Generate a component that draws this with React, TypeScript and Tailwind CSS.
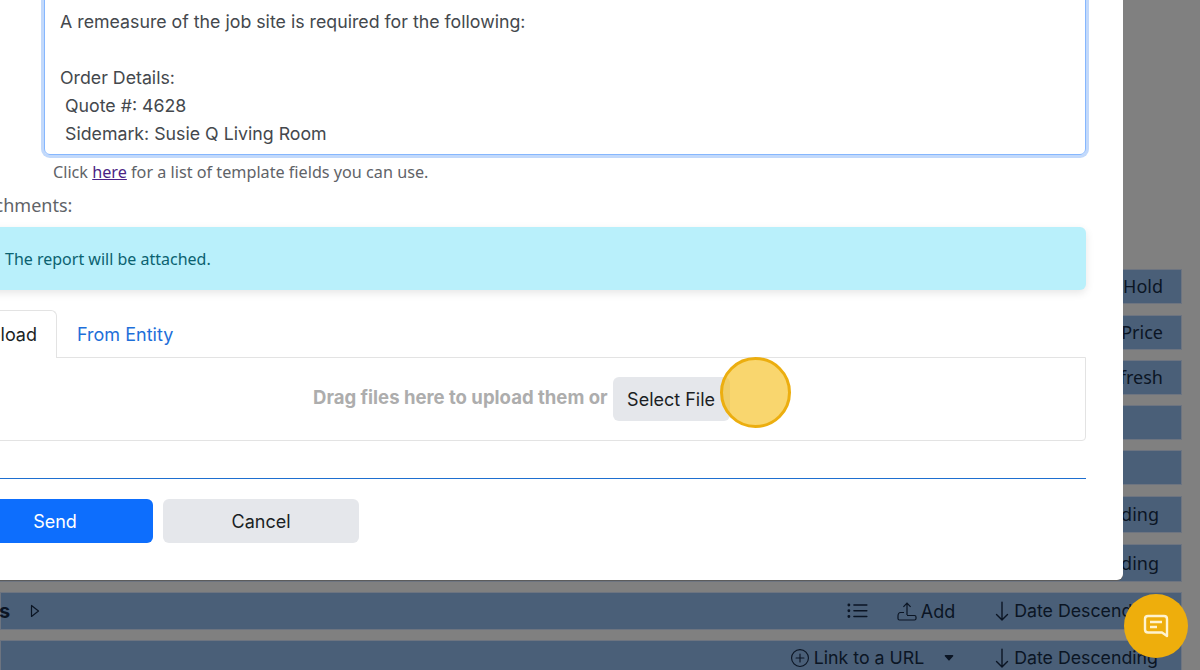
import { BsArrowDown, BsCaretDownFill, BsListUl, BsPlusCircle } from "react-icons/bs";

const sideRows = [
  { label: "Hold", height: "h-[35px]", margin: "mt-0", pad: "pr-[18px]" },
  { label: "Price", height: "h-[35px]", margin: "mt-[11px]", pad: "pr-[18px]" },
  { label: "Refresh", height: "h-[35px]", margin: "mt-[10px]", pad: "pr-[18px]" },
  { label: "", height: "h-[35px]", margin: "mt-[10px]", pad: "pr-[18px]" },
  { label: "", height: "h-[35px]", margin: "mt-[10px]", pad: "pr-[18px]" },
  { label: "Date Descending", height: "h-[37px]", margin: "mt-[11px]", pad: "pr-[22px]" },
  { label: "Date Descending", height: "h-[38px]", margin: "mt-[11px]", pad: "pr-[22px]" },
];

const TrayUpload = () => (
  <svg width="20" height="19" viewBox="0 0 20 19" fill="none" stroke="currentColor" strokeWidth="1.2">
    <path d="M10 13V1.2M6.4 4.800 10 1.200l3.600 3.600" />
    <path d="M7 10.500H3.500C2 10.500 1 12 1 14v2.500c0 .9.600 1.500 1.500 1.500h15c.9 0 1.500-.6 1.500-1.500V15c0-.9-.6-1.500-1.500-1.500H10" />
  </svg>
);

const ChatIcon = () => (
  <svg width="26" height="24" viewBox="0 0 26 24" fill="none" stroke="#fff3cf" strokeWidth="2.400">
    <path d="M5 2h16c1.700 0 3 1.300 3 3v17l-5-3.500H5c-1.700 0-3-1.300-3-3V5c0-1.700 1.300-3 3-3Z" strokeLinejoin="round" />
    <path d="M7 8h12M7 13h7" />
  </svg>
);

const OutlineCaret = () => (
  <svg width="10" height="14" viewBox="0 0 10 14" fill="none" stroke="currentColor" strokeWidth="1.200">
    <path d="M1.500 1.500v11L8.500 7Z" strokeLinejoin="round" />
  </svg>
);

export default function App() {
  return (
    <div className="relative h-[670px] w-[1200px] overflow-hidden bg-[#808080] text-[18px] text-[#0b1524] [font-family:Inter,sans-serif]">
      {/* Page behind the dialog */}
      <div className="flex flex-col pt-[269px] pr-[18px]">
        {sideRows.map((row, i) => (
          <div
            key={i}
            className={`flex items-center justify-end border border-[#6d7480] bg-[#4a5f78] [font-family:'Noto_Sans',sans-serif] ${row.pad} ${row.height} ${row.margin}`}
          >
            {row.label}
          </div>
        ))}

        <div className="mt-[10px] flex h-[38px] items-center justify-between border border-[#6d7480] bg-[#4a5f78] pr-[23px]">
          <div className="flex items-center">
            <span className="-ml-[2px] text-[20px] font-bold">s</span>
            <span className="ml-[20px]">
              <OutlineCaret />
            </span>
          </div>
          <div className="flex items-center text-[17.75px]">
            <BsListUl className="text-[23px]" />
            <span className="ml-[28px]">
              <TrayUpload />
            </span>
            <span className="ml-[4px] text-[18px]">Add</span>
            <BsArrowDown className="ml-[36px] text-[22px]" />
            <span className="ml-[1px] whitespace-nowrap">Date Descending</span>
          </div>
        </div>

        <div className="mt-[10px] flex h-[36px] items-center justify-end border border-[#6d7480] bg-[#4a5f78] pr-[23px] text-[17.75px]">
          <BsPlusCircle className="text-[18px]" />
          <span className="ml-[5px]">Link to a URL</span>
          <BsCaretDownFill className="ml-[19px] text-[12px]" />
          <BsArrowDown className="ml-[36px] text-[22px]" />
          <span className="ml-[1px] whitespace-nowrap">Date Descending</span>
        </div>
      </div>

      {/* Dialog */}
      <div className="absolute top-0 left-0 h-[580px] w-[1123px] overflow-hidden rounded-br-[6px] bg-white pr-[37px] text-[#44484d] shadow-[0_1px_0_#5c5c5c]">
        <div className="-mt-[8px] ml-[44px] h-[163px] rounded-[6px] border border-[#86b7fe] px-[15px] pt-[15px] text-[17.75px] leading-[28px] whitespace-pre shadow-[0_0_0_3px_#c2d9fb]">
          <div>A remeasure of the job site is required for the following:</div>
          <div>&nbsp;</div>
          <div>Order Details:</div>
          <div> Quote #: 4628</div>
          <div> Sidemark: Susie Q Living Room</div>
        </div>

        <div className="mt-[5px] ml-[53px] text-[16.2px] leading-[24px] text-[#5f6368] [font-family:'Noto_Sans',sans-serif]">
          Click <a className="text-[#4b1f85] underline">here</a> for a list of template fields you can use.
        </div>

        <div className="mt-[9px] -ml-[40px] text-[18px] leading-[24px] text-[#5f6368] [font-family:'Noto_Sans',sans-serif]">
          Attachments:
        </div>

        <div className="mt-[10px] -ml-[20px] flex h-[63px] items-center rounded-[6px] bg-[#b9f0fb] pl-[25px] text-[16px] text-[#0b6270] shadow-[0_3px_8px_rgba(0,0,0,0.1)] [font-family:'Noto_Sans',sans-serif]">
          The report will be attached.
        </div>

        <div className="mt-[20px] flex h-[47px]">
          <div className="relative z-10 -mb-px -ml-[40px] flex w-[97px] items-center justify-end rounded-t-[6px] border border-b-0 border-[#e3e3e3] bg-white pr-[19px] text-[#1b1f24]">
            Upload
          </div>
          <div className="ml-[20px] flex items-center pt-[2px] text-[#1e6fd9]">From Entity</div>
        </div>

        <div className="-ml-[20px] flex h-[84px] items-center rounded-b-[4px] border border-[#e3e3e3] pl-[332px]">
          <div className="-mt-[2px] mr-[5px] text-[18.55px] font-bold whitespace-nowrap text-[#adadad]">
            Drag files here to upload them or
          </div>
          <div className="flex h-[44px] w-[117px] items-center justify-center rounded-[6px] bg-[#e5e7eb] text-[#1b1f24]">
            Select File
          </div>
        </div>

        <div className="mt-[37px] -ml-[20px] h-px bg-[#1e6fd0]" />

        <div className="mt-[20px] flex gap-[10px]">
          <div className="-ml-[43px] flex h-[44px] w-[196px] items-center justify-center rounded-[6px] bg-[#0d6efd] text-white">
            Send
          </div>
          <div className="flex h-[44px] w-[196px] items-center justify-center rounded-[6px] bg-[#e5e7eb] text-[#1b1f24]">
            Cancel
          </div>
        </div>
      </div>

      {/* Highlight marker over the Select File button */}
      <div className="absolute top-[357px] left-[720px] size-[71px] rounded-full border-[3px] border-[#ecae0f] bg-[#f6c020]/65" />

      {/* Chat launcher */}
      <div className="absolute top-[594px] left-[1124px] flex size-[64px] items-center justify-center rounded-full bg-[#eeae0c]">
        <ChatIcon />
      </div>
    </div>
  );
}
